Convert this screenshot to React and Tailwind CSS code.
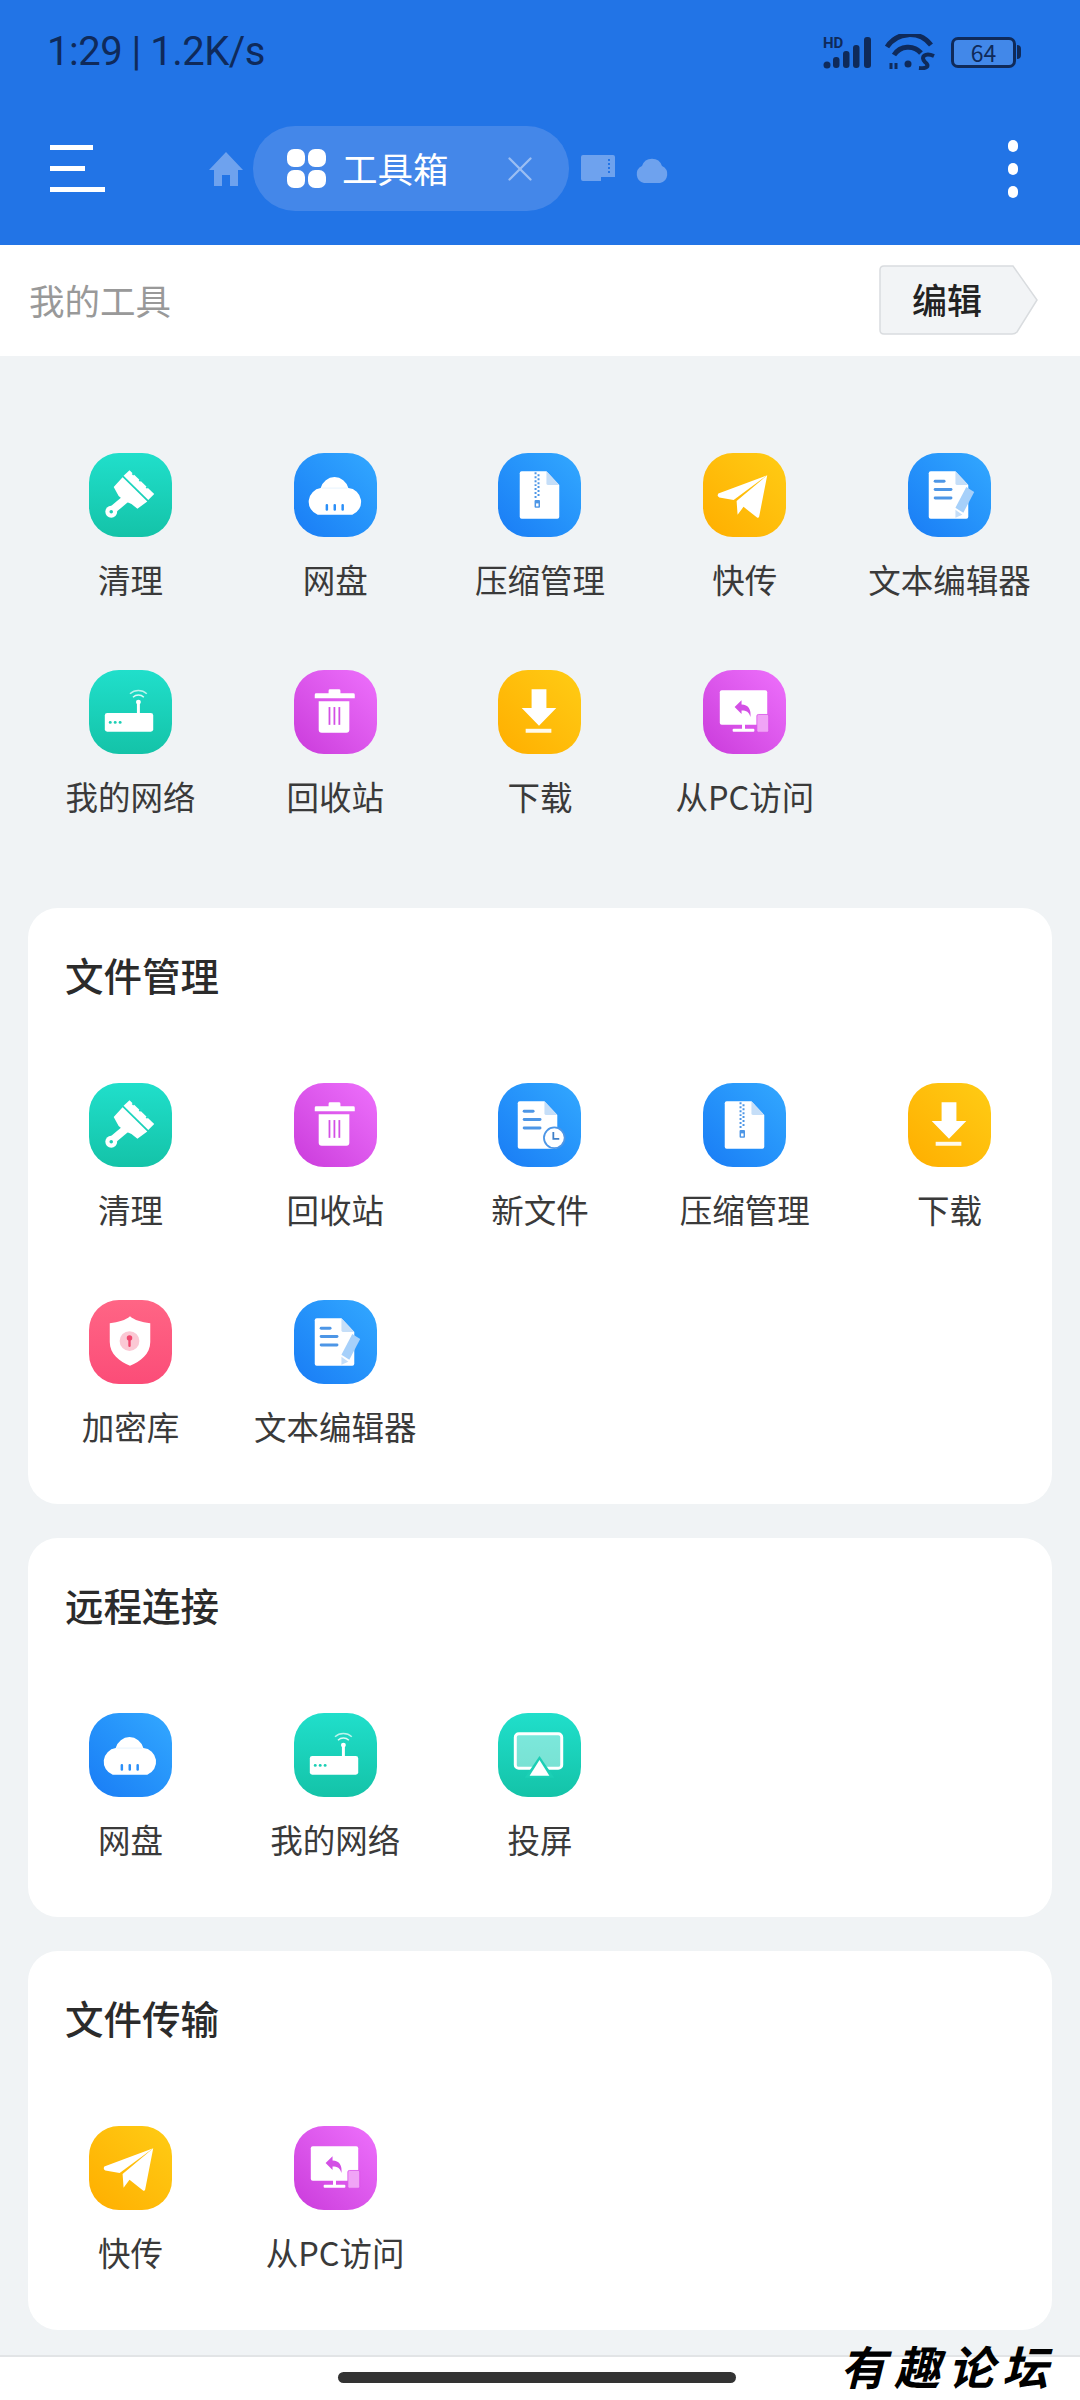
import { X } from 'lucide-react'

const GRADS = {
  teal: 'bg-gradient-to-b from-[#20dfcb] to-[#14c3a8]',
  blue: 'bg-gradient-to-bl from-[#33a8ff] to-[#1a7cf5]',
  amber: 'bg-gradient-to-bl from-[#ffcc14] to-[#ffae00]',
  purple: 'bg-gradient-to-bl from-[#ee70fc] to-[#ca3adb]',
  red: 'bg-gradient-to-b from-[#ff6585] to-[#fb4c78]',
}

/* Glyphs are drawn in an 84x84 box, same size as the tile */
const Brush = () => (
  <>
    <path d="M41 17 L66 41 L60 47 L35 22.500 Z" fill="#fff" />
    <path d="M47 18.500 L44 21.500 M54 25 L51 28 M61 32 L58 35" stroke="#1fd8c2" strokeWidth="2" />
    <path d="M34 24 L59 48.500 L49 56 L43 51 L36 48 L30 43 L25 34 Z" fill="#fff" />
    <path d="M37 46 L24 57" stroke="#fff" strokeWidth="8" />
    <circle cx="22.500" cy="59" r="6" fill="#fff" />
    <circle cx="22.500" cy="59" r="1.800" fill="#1bcfb5" />
  </>
)
const CloudDrive = () => (
  <>
    <path d="M27 35 A14.500 15 0 0 1 55 35 A14 14 0 0 1 59 62 H24 A14 14 0 0 1 27 35 Z" fill="#fff" />
    <path d="M28 35 H54" stroke="#dfeefc" strokeWidth="0.800" />
    <rect x="32" y="51" width="2.500" height="7" rx="1.200" fill="#2a8ff8" />
    <rect x="40" y="51" width="2.500" height="7" rx="1.200" fill="#2a8ff8" />
    <rect x="48" y="51" width="2.500" height="7" rx="1.200" fill="#2a8ff8" />
  </>
)
const Doc = ({ x = 21 }) => (
  <>
    <path d={`M${x + 2} 18 H${x + 27} L${x + 40} 32 V64 a2 2 0 0 1 -2 2 H${x + 2} a2 2 0 0 1 -2 -2 V20 a2 2 0 0 1 2 -2 Z`} fill="#fff" />
    <path d={`M${x + 27} 18 L${x + 40} 32 H${x + 29} a2 2 0 0 1 -2 -2 Z`} fill="#c5def8" />
  </>
)
const Zip = () => (
  <>
    <Doc x={22} />
    <path d="M38 19 V45" stroke="#4d96e6" strokeWidth="2" strokeDasharray="2 2" />
    <path d="M41 21 V45" stroke="#4d96e6" strokeWidth="2" strokeDasharray="2 2" />
    <rect x="37" y="47" width="5.500" height="8" rx="1" fill="#4d96e6" />
    <rect x="38.500" y="50.500" width="2.500" height="3" fill="#fff" />
  </>
)
const Plane = () => (
  <>
    <path d="M65 22 L15.500 40.500 Q14 43 16.500 44.500 L31 47 Z" fill="#fff" />
    <path d="M65 22 L34 48 L35 62 L41 54 L55 65 Q57 65.500 57 63 Z" fill="#fff" />
  </>
)
const Lines = () => (
  <>
    <rect x="26" y="26.500" width="12" height="3" rx="1.500" fill="#4d96e6" />
    <rect x="26" y="35" width="19" height="3" rx="1.500" fill="#4d96e6" />
    <rect x="26" y="43.500" width="19" height="3" rx="1.500" fill="#4d96e6" />
  </>
)
const Editor = () => (
  <>
    <Doc />
    <Lines />
    <path d="M59 34 L67 39 L56 60 L48 55 Z" fill="#a6d0fa" />
    <path d="M48 57 L55 62 L48 65 Z" fill="#c5def8" />
  </>
)
const Router = () => (
  <>
    <rect x="16" y="43" width="49" height="19" rx="2.500" fill="#fff" />
    <rect x="48.500" y="31" width="3" height="13" rx="1.500" fill="#fff" />
    <circle cx="50" cy="32" r="2.500" fill="#fff" />
    <path d="M44.500 27 A8 8 0 0 1 55.500 27" stroke="#fff" strokeWidth="1.500" fill="none" opacity="0.850" />
    <path d="M41.500 23.500 A12.500 12.500 0 0 1 58.500 23.500" stroke="#fff" strokeWidth="1.500" fill="none" opacity="0.700" />
    <circle cx="21.500" cy="52.500" r="1.500" fill="#1bcfb5" />
    <circle cx="26.500" cy="52.500" r="1.500" fill="#1bcfb5" />
    <circle cx="31.500" cy="52.500" r="1.500" fill="#1bcfb5" />
  </>
)
const Trash = () => (
  <>
    <path d="M35 23 V20.500 a1.500 1.500 0 0 1 1.500 -1.500 H45.500 a1.500 1.500 0 0 1 1.500 1.500 V23 H60 a1.500 1.500 0 0 1 1.500 1.500 V28 H21 V24.500 a1.500 1.500 0 0 1 1.500 -1.500 Z" fill="#fff" />
    <path d="M25 31 H56 V60 a3 3 0 0 1 -3 3 H28 a3 3 0 0 1 -3 -3 Z" fill="#fff" />
    <rect x="35" y="37" width="1.800" height="18" fill="#d34fe5" />
    <rect x="40" y="37" width="1.800" height="18" fill="#d34fe5" />
    <rect x="45" y="37" width="1.800" height="18" fill="#d34fe5" />
  </>
)
const Download = () => (
  <>
    <path d="M34 19 H49 V38 H59 L41.500 56 L24 38 H34 Z" fill="#fff" />
    <rect x="28" y="59" width="26" height="4" fill="#fff" opacity="0.920" />
  </>
)
const Pc = () => (
  <>
    <rect x="17" y="20" width="48" height="35" rx="2" fill="#fff" />
    <rect x="39.500" y="54" width="3" height="6" fill="#fff" />
    <rect x="30" y="59" width="22" height="3" rx="1" fill="#fff" />
    <path d="M32 37 L39 30 V34.500 C46 34.500 49 40 48 47 C46.500 42 44 40.500 39 40.500 V44 Z" fill="#d34fe5" />
    <rect x="54.500" y="44.500" width="12" height="18" rx="1.500" fill="#f0a4f6" stroke="#d84fe8" strokeWidth="0.800" />
  </>
)
const NewFile = () => (
  <>
    <Doc x={20} />
    <rect x="25" y="26.500" width="12" height="3" rx="1.500" fill="#4d96e6" />
    <rect x="25" y="35" width="19" height="3" rx="1.500" fill="#4d96e6" />
    <rect x="25" y="43.500" width="19" height="3" rx="1.500" fill="#4d96e6" />
    <circle cx="57" cy="55" r="10.500" fill="#fff" stroke="#4d96e6" strokeWidth="1.800" />
    <path d="M56 49 V56 H62" stroke="#3f7fc8" strokeWidth="1.800" fill="none" />
  </>
)
const Shield = () => (
  <>
    <path d="M41.500 16 C46 20 53 22 62 23 V42 C62 54 52 62 41.500 66 C31 62 21 54 21 42 V23 C30 22 37 20 41.500 16 Z" fill="#fff" />
    <circle cx="41" cy="41" r="10" fill="#fbc8d4" />
    <circle cx="41" cy="38" r="2.800" fill="#f0476e" />
    <rect x="39.800" y="38" width="2.400" height="9" rx="1.200" fill="#f0476e" />
  </>
)
const Cast = () => (
  <>
    <rect x="17.500" y="20.500" width="47" height="35" rx="3.500" fill="#fff" fillOpacity="0.420" stroke="#fff" strokeWidth="3" />
    <path d="M42 43 L57 65 H27 Z" fill="#1bcfb5" />
    <path d="M42 47 L52 63 H32 Z" fill="#fff" />
  </>
)

const TOOLS = {
  clean: { label: '清理', grad: 'teal', glyph: <Brush /> },
  drive: { label: '网盘', grad: 'blue', glyph: <CloudDrive /> },
  zip: { label: '压缩管理', grad: 'blue', glyph: <Zip /> },
  send: { label: '快传', grad: 'amber', glyph: <Plane /> },
  editor: { label: '文本编辑器', grad: 'blue', glyph: <Editor /> },
  network: { label: '我的网络', grad: 'teal', glyph: <Router /> },
  trash: { label: '回收站', grad: 'purple', glyph: <Trash /> },
  download: { label: '下载', grad: 'amber', glyph: <Download /> },
  pc: { label: '从PC访问', grad: 'purple', glyph: <Pc /> },
  recent: { label: '新文件', grad: 'blue', glyph: <NewFile /> },
  vault: { label: '加密库', grad: 'red', glyph: <Shield /> },
  cast: { label: '投屏', grad: 'teal', glyph: <Cast /> },
}

function Tool({ id }) {
  const t = TOOLS[id]
  return (
    <div className="flex flex-col items-center">
      <div className={`h-[84px] w-[83px] rounded-[30px] ${GRADS[t.grad]}`}>
        <svg viewBox="0 0 84 84" className="h-full w-full">{t.glyph}</svg>
      </div>
      <span className="mt-[20px] mb-[1px] h-[44px] whitespace-nowrap text-[32.500px] leading-[44px] font-normal text-[#3a3a3a]">{t.label}</span>
    </div>
  )
}

function ToolGrid({ items }) {
  return (
    <div className="grid grid-cols-5 gap-y-[68px]">
      {items.map((id) => (
        <Tool key={id} id={id} />
      ))}
    </div>
  )
}

function Section({ title, items }) {
  return (
    <section className="rounded-[30px] bg-white pt-[41px] pb-[55px]">
      <h2 className="h-[50px] pl-[37px] text-[38.500px] leading-[50px] font-medium text-[#2b2b2b]">{title}</h2>
      <div className="mt-[84px]">
        <ToolGrid items={items} />
      </div>
    </section>
  )
}

function StatusIcons() {
  return (
    <div className="flex items-center">
      <svg width="52" height="34" viewBox="0 0 52 34" fill="#0f2a5a">
        <text x="0" y="13" fontSize="15" fontWeight="700" fontFamily="Roboto, sans-serif">HD</text>
        <circle cx="4" cy="30" r="3.500" />
        <rect x="10" y="22" width="6.500" height="11" rx="3" />
        <rect x="20" y="16" width="6.500" height="17" rx="3" />
        <rect x="30" y="10" width="6.500" height="23" rx="3" />
        <rect x="41" y="2" width="7" height="31" rx="3" />
      </svg>
      <svg width="52" height="36" viewBox="0 0 52 36" fill="none" stroke="#0f2a5a" strokeWidth="5" className="ml-[10px]">
        <path d="M2 13 A27 27 0 0 1 46 11" />
        <path d="M9 21 A17 17 0 0 1 36 19" />
        <circle cx="23" cy="30" r="3.500" fill="#0f2a5a" stroke="none" />
        <path d="M49 22 C40 18 35 23 40 28 C45 32 42 35 34 34" strokeWidth="4" />
        <path d="M6 35 V29 M11 35 V29" strokeWidth="3" />
      </svg>
      <div className="relative ml-[14px] flex h-[31px] w-[65px] items-center justify-center rounded-[7px] border-[3px] border-[#0f2a5a] bg-white/15 text-[23px] leading-none text-[#0f2a5a]">
        64
        <span className="absolute top-[5px] -right-[8px] h-[14px] w-[4px] rounded-r-sm bg-[#0f2a5a]" />
      </div>
    </div>
  )
}

export default function App() {
  return (
    <div className="relative flex h-[2400px] w-[1080px] flex-col overflow-hidden bg-[#f0f3f5] font-['Noto_Sans_CJK_SC',sans-serif]">
      {/* Blue header with status bar and tab strip */}
      <header className="h-[245px] bg-[#2274e6]">
        <div className="flex h-[104px] items-center justify-between pr-[64px] pl-[47px]">
          <span className="font-['Roboto',sans-serif] text-[40px] tracking-[-0.500px] text-[#0f2a5a]">1:29 | 1.2K/s</span>
          <StatusIcons />
        </div>
        <div className="mt-[22px] flex h-[85px] items-center">
          <div className="ml-[50px] flex w-[55px] flex-col gap-[16px]">
            <span className="h-[5px] w-[43px] bg-white" />
            <span className="h-[5px] w-[35px] bg-white" />
            <span className="h-[5px] w-[55px] bg-white" />
          </div>
          <svg width="34" height="34" viewBox="0 0 34 34" fill="#6ea2ee" className="ml-[104px]">
            <path d="M17 0 L34 18 H29 V34 H21 V23 H13 V34 H5 V18 H0 Z" />
          </svg>
          <div className="ml-[10px] flex h-[85px] w-[316px] items-center rounded-[42px] bg-[#4487e9] pl-[34px]">
            <div className="grid h-[39px] w-[39px] grid-cols-2 gap-[3px]">
              <span className="rounded-[7px] bg-white" />
              <span className="rounded-[7px] bg-white" />
              <span className="rounded-[7px] bg-white" />
              <span className="rounded-[7px] bg-white" />
            </div>
            <span className="-mt-[2px] ml-[16px] text-[35.500px] leading-none text-white">工具箱</span>
            <X size={42} strokeWidth={1.300} color="#9bbef3" className="ml-[50px]" />
          </div>
          <svg width="34" height="28" viewBox="0 0 34 28" fill="#6ea2ee" className="ml-[12px]">
            <path d="M2 0 H32 a2 2 0 0 1 2 2 V22 H20 V26 H2 a2 2 0 0 1 -2 -2 V2 a2 2 0 0 1 2 -2 Z" />
            <path d="M28 4 V20" stroke="#2274e6" strokeWidth="2" strokeDasharray="2 2" />
          </svg>
          <svg width="34" height="28" viewBox="0 0 34 28" fill="#6ea2ee" className="ml-[20px]">
            <path d="M9 28 A9 9 0 0 1 7 11 A10.500 10.500 0 0 1 27 11 A9 9 0 0 1 25 28 Z" />
          </svg>
          <div className="mr-[62px] ml-auto flex flex-col gap-[11px]">
            <span className="h-[12px] w-[10px] rounded-full bg-white" />
            <span className="h-[12px] w-[10px] rounded-full bg-white" />
            <span className="h-[12px] w-[10px] rounded-full bg-white" />
          </div>
        </div>
      </header>

      {/* Breadcrumb row */}
      <div className="flex h-[111px] items-center justify-between bg-white pr-[41px] pb-[2px] pl-[29px]">
        <span className="text-[35.500px] text-[#999999]">我的工具</span>
        <div className="relative flex h-[70px] w-[160px] items-center pl-[33px]">
          <svg viewBox="0 0 160 70" className="absolute inset-0 h-full w-full">
            <path d="M5 1 H134 L158 35 L138 67 Q136 69 133 69 H5 Q1 69 1 65 V5 Q1 1 5 1 Z" fill="#f2f4f6" stroke="#d9dcdf" strokeWidth="1.500" />
          </svg>
          <span className="relative -mt-[2px] text-[35px] leading-none font-medium text-[#222222]">编辑</span>
        </div>
      </div>

      {/* Pinned tools */}
      <div className="mx-[28px] mt-[97px]">
        <ToolGrid items={['clean', 'drive', 'zip', 'send', 'editor', 'network', 'trash', 'download', 'pc']} />
      </div>

      <div className="mx-[28px] mt-[89px] flex flex-col gap-[34px]">
        <Section title="文件管理" items={['clean', 'trash', 'recent', 'zip', 'download', 'vault', 'editor']} />
        <Section title="远程连接" items={['drive', 'network', 'cast']} />
        <Section title="文件传输" items={['send', 'pc']} />
      </div>

      {/* Gesture bar */}
      <div className="mt-auto flex h-[45px] items-center justify-center border-t-2 border-[#e2e4e6] bg-white pb-[2px]">
        <span className="mr-[6px] h-[11px] w-[398px] rounded-full bg-[#333333]" />
      </div>

      {/* Forum watermark stamped over the corner */}
      <span className="absolute right-[24px] bottom-[7px] text-[46px] leading-[56px] font-bold tracking-[8px] text-black italic">有趣论坛</span>
    </div>
  )
}
